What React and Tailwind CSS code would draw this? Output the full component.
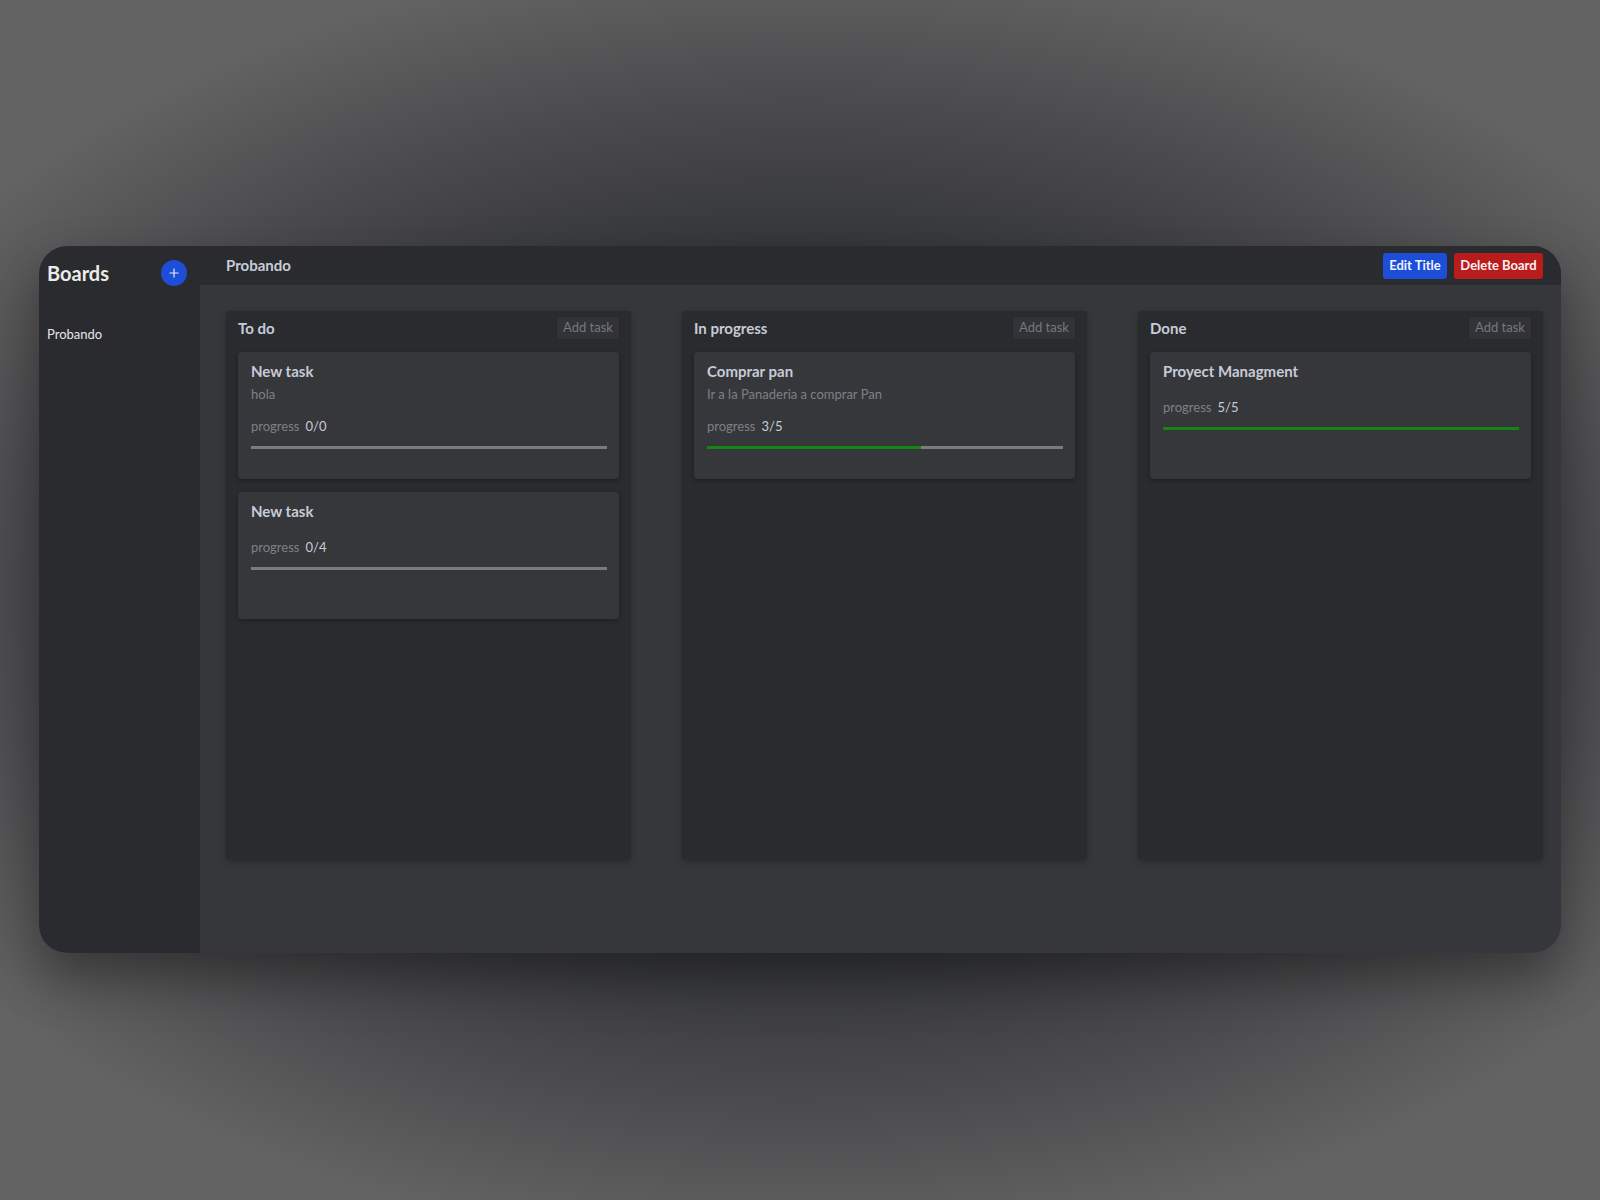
import React from "react";

const FONT = { fontFamily: 'Lato, "Noto Sans", sans-serif' };

function Progress({ done, total }) {
  const pct = total > 0 ? (done / total) * 100 : 0;
  return (
    <div className="h-[3px] w-full bg-[#7c7c7e]">
      <div className="h-full bg-[#148414]" style={{ width: `${pct}%` }} />
    </div>
  );
}

function Card({ title, desc, done, total }) {
  return (
    <div className="h-[127px] rounded-[4px] bg-[#36373b] pl-[13px] pr-[12px] pt-[8px] shadow-[0_2px_4px_rgba(0,0,0,0.25)]">
      <div className="text-[15px] font-bold leading-[22px] text-[#c6ccd7]">{title}</div>
      {desc ? (
        <div className="mt-[3px] text-[13px] leading-[19px] text-[#7e8085]">{desc}</div>
      ) : null}
      <div
        className={`${desc ? "mt-[13px]" : "mt-[16px]"} flex items-center gap-[6px] text-[13px] leading-[19px]`}
      >
        <span className="text-[#7e8085]">progress</span>
        <span className="text-[#c6ccd7]">
          {done}/{total}
        </span>
      </div>
      <div className="mt-[10px]">
        <Progress done={done} total={total} />
      </div>
    </div>
  );
}

function Column({ title, cards }) {
  return (
    <div className="flex h-[549px] flex-col rounded-[3px] bg-[#2a2b2f] px-[12px] pt-[6px] shadow-[0_2px_6px_rgba(0,0,0,0.25)]">
      <div className="flex h-[22px] items-center justify-between">
        <span className="text-[15px] font-bold text-[#c6ccd7]">{title}</span>
        <button className="h-[22px] w-[62px] rounded-[3px] bg-[#323337] text-center text-[13px] text-[#76787d]">
          Add task
        </button>
      </div>
      <div className="mt-[13px] flex flex-col gap-[13px]">
        {cards.map((c, i) => (
          <Card key={i} {...c} />
        ))}
      </div>
    </div>
  );
}

export default function App() {
  const columns = [
    {
      title: "To do",
      cards: [
        { title: "New task", desc: "hola", done: 0, total: 0 },
        { title: "New task", done: 0, total: 4 },
      ],
    },
    {
      title: "In progress",
      cards: [
        { title: "Comprar pan", desc: "Ir a la Panaderia a comprar Pan", done: 3, total: 5 },
      ],
    },
    {
      title: "Done",
      cards: [{ title: "Proyect Managment", done: 5, total: 5 }],
    },
  ];

  return (
    <div
      className="flex h-[1200px] w-full items-start bg-[#636364] bg-[radial-gradient(1030px_650px_at_50%_50%,#2d2e31_0%,#36373a_55%,#4c4c4e_78%,#636364_100%)] px-[39px] pt-[246px]"
      style={FONT}
    >
      <div className="flex h-[707px] w-full overflow-hidden rounded-[28px] shadow-[0_25px_50px_rgba(0,0,0,0.35)]">
        <aside className="flex w-[161px] shrink-0 flex-col bg-[#2a2b2f] pl-[8px] pr-[13px]">
          <div className="flex h-[54px] items-center justify-between">
            <span className="text-[20px] font-bold leading-[28px] text-[#ebebeb]">Boards</span>
            <button className="flex h-[26px] w-[26px] items-center justify-center rounded-full bg-[#1d4ed8]">
              <svg width="12" height="12" viewBox="0 0 12 12">
                <path d="M6 1.5v9M1.5 6h9" stroke="#e8ecff" strokeWidth="1.2" />
              </svg>
            </button>
          </div>
          <div className="mt-[25px] text-[13px] leading-[18px] text-[#e6e6e6]">Probando</div>
        </aside>
        <main className="flex flex-1 flex-col bg-[#36373b]">
          <header className="flex h-[39px] shrink-0 items-center justify-between bg-[#2a2b2f] pl-[26px] pr-[18px]">
            <span className="text-[15px] font-bold text-[#c6ccd7]">Probando</span>
            <div className="flex items-center gap-[7px]">
              <button className="h-[26px] w-[64px] rounded-[3px] bg-[#1d4ed8] text-center text-[13px] font-bold text-[#f1f3ff]">
                Edit Title
              </button>
              <button className="h-[26px] w-[89px] rounded-[3px] bg-[#b91c1c] text-center text-[13px] font-bold text-[#fdf0f0]">
                Delete Board
              </button>
            </div>
          </header>
          <div className="grid grid-cols-3 gap-[51px] pl-[26px] pr-[18px] pt-[26px]">
            {columns.map((col, i) => (
              <Column key={i} {...col} />
            ))}
          </div>
        </main>
      </div>
    </div>
  );
}
